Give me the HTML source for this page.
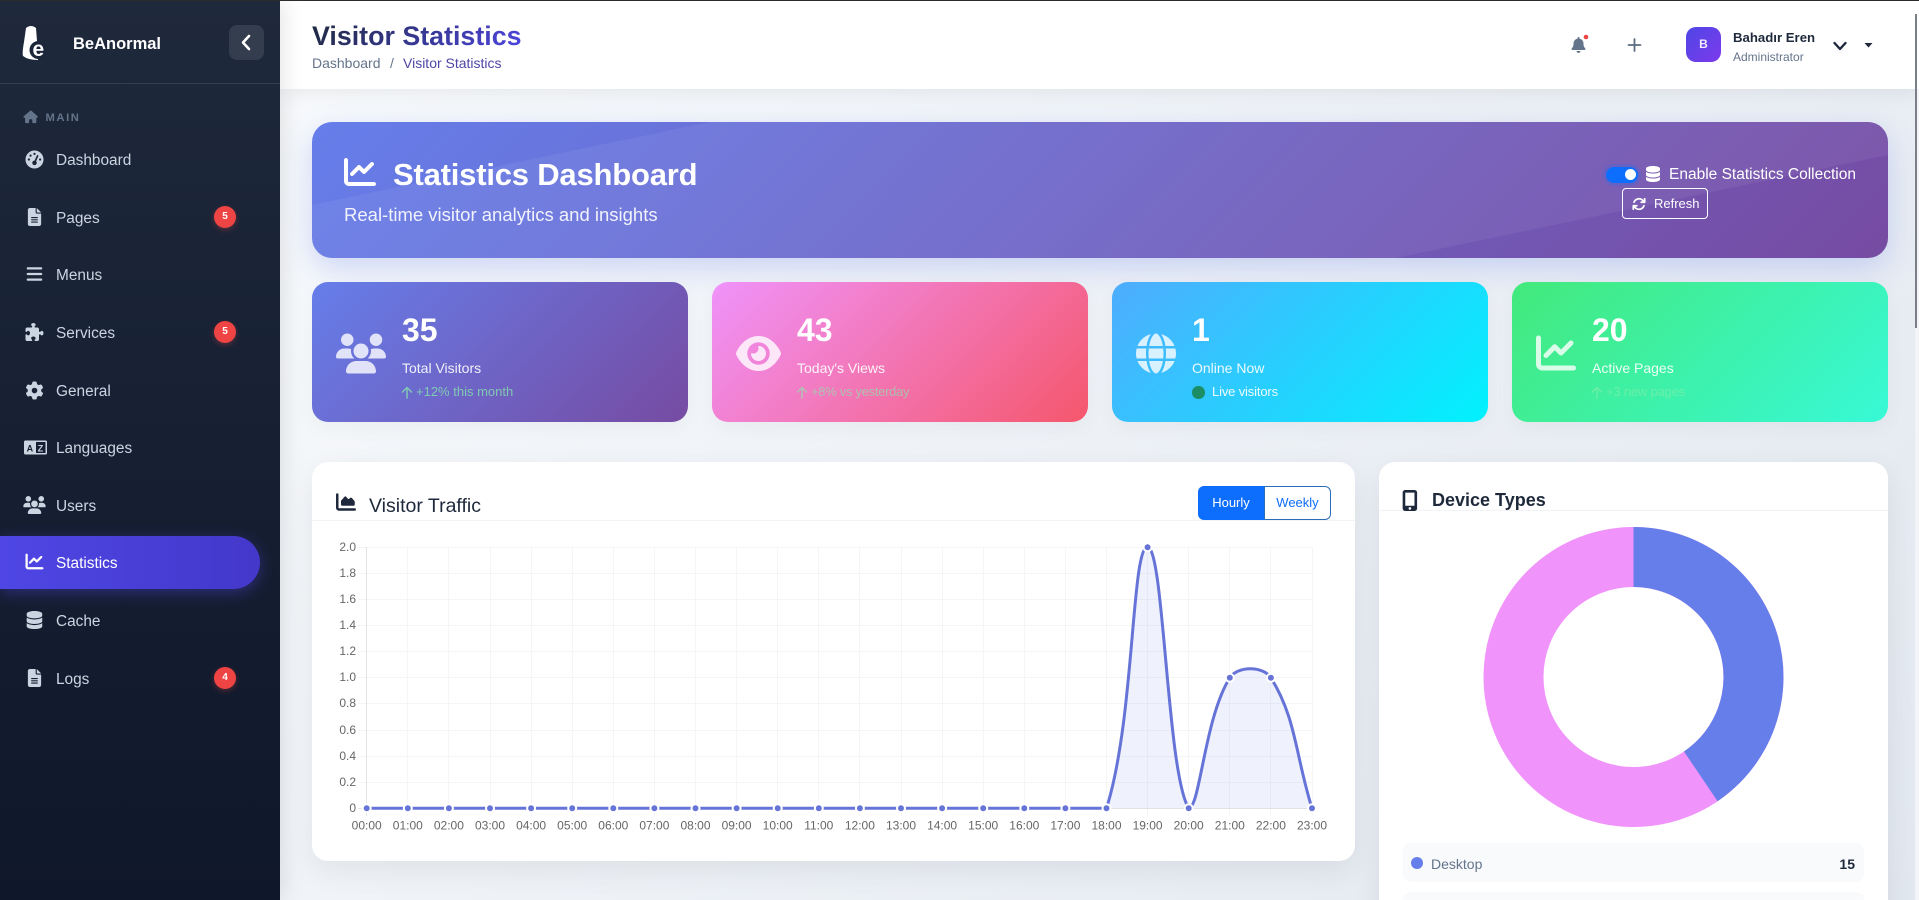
<!DOCTYPE html>
<html lang="en">
<head>
<meta charset="utf-8">
<title>Visitor Statistics</title>
<style>
html,body{margin:0;padding:0;width:1919px;height:900px;overflow:hidden;background:#f1f4f9;font-family:"Liberation Sans",Arial,sans-serif}
#root{position:relative;width:1919px;height:900px;overflow:hidden}
#root div{position:absolute;white-space:nowrap;box-sizing:border-box}
#main{left:280px;top:0;width:1639px;height:900px;background:linear-gradient(135deg,#f8fafc 0%,#e2e8f0 100%)}
#side{left:0;top:0;width:280px;height:900px;background:linear-gradient(180deg,#1e293b 0%,#0f172a 100%);box-shadow:4px 0 20px rgba(0,0,0,.1)}
#head{left:280px;top:0;width:1639px;height:89px;background:#fff;box-shadow:0 2px 20px rgba(0,0,0,.08)}
.nav{left:56px;font-size:15.4px;line-height:24px;height:24px;color:#cbd5e1}
.bdg{left:214px;width:22px;height:22px;border-radius:50%;background:#ef4444;color:#fff;font-size:10px;font-weight:bold;line-height:22px;text-align:center;box-shadow:0 2px 6px rgba(239,68,68,.3)}
.card{top:282px;width:376px;height:140px;border-radius:16px;box-shadow:0 6px 20px rgba(0,0,0,.04)}
.num{top:309.5px;font-size:32px;font-weight:bold;line-height:40px;color:#fff}
.lab{top:357.5px;font-size:14px;line-height:20px;color:rgba(255,255,255,.9)}
.sub{top:382px;font-size:13px;line-height:20px}
.white{background:#fff;border-radius:16px;box-shadow:0 10px 30px rgba(0,0,0,.07)}
</style>
</head>
<body>
<div id="root">
<div id="main"></div>

<!-- Hero -->
<div style="left:312px;top:122px;width:1576px;height:136px;border-radius:20px;background:linear-gradient(135deg,#667eea 0%,#764ba2 100%);box-shadow:0 10px 30px rgba(102,126,234,.28);overflow:hidden">
  <svg width="1576" height="136" style="position:absolute;left:0;top:0"><polygon points="0,83 398,0 1576,0 1576,33 1084,136 0,136" fill="rgba(255,255,255,.06)"/></svg>
</div>
<div style="left:393px;top:153px;font-size:31px;letter-spacing:-.2px;font-weight:bold;line-height:44px;color:#fff">Statistics Dashboard</div>
<div style="left:344px;top:201px;font-size:18.5px;line-height:28px;color:rgba(255,255,255,.9)">Real-time visitor analytics and insights</div>
<div style="left:1606px;top:166.5px;width:32px;height:16px;border-radius:8px;background:#0d6efd;box-shadow:0 0 0 3px rgba(13,110,253,.18)"></div>
<div style="left:1624.5px;top:169px;width:11px;height:11px;border-radius:50%;background:#fff"></div>
<div style="left:1669px;top:164px;font-size:15.5px;line-height:22px;color:#fff">Enable Statistics Collection</div>
<div style="left:1622px;top:188px;width:86px;height:31px;border:1px solid #fff;border-radius:4px"></div>
<div style="left:1654px;top:194px;font-size:13px;line-height:20px;color:#fff">Refresh</div>

<!-- Stat cards -->
<div class="card" style="left:312px;background:linear-gradient(135deg,#667eea 0%,#764ba2 100%)"></div>
<div class="card" style="left:712px;background:linear-gradient(135deg,#f093fb 0%,#f5576c 100%)"></div>
<div class="card" style="left:1112px;background:linear-gradient(135deg,#4facfe 0%,#00f2fe 100%)"></div>
<div class="card" style="left:1512px;background:linear-gradient(135deg,#43e97b 0%,#38f9d7 100%)"></div>
<div class="num" style="left:402px">35</div><div class="lab" style="left:402px">Total Visitors</div>
<div class="sub" style="left:416px;color:rgba(134,239,172,.72)">+12% this month</div>
<div class="num" style="left:797px">43</div><div class="lab" style="left:797px">Today's Views</div>
<div class="sub" style="left:811px;letter-spacing:-.3px;color:rgba(134,239,172,.6)">+8% vs yesterday</div>
<div class="num" style="left:1192px">1</div><div class="lab" style="left:1192px">Online Now</div>
<div style="left:1192px;top:386px;width:12.5px;height:12.5px;border-radius:50%;background:#198754;opacity:.9"></div>
<div class="sub" style="left:1212px;letter-spacing:-.15px;color:rgba(255,255,255,.9)">Live visitors</div>
<div class="num" style="left:1592px">20</div><div class="lab" style="left:1592px">Active Pages</div>
<div class="sub" style="left:1606px;letter-spacing:-.2px;color:rgba(134,239,172,.6)">+3 new pages</div>

<!-- Chart card -->
<div class="white" style="left:312px;top:462px;width:1043px;height:399px"></div>
<div style="left:312px;top:520px;width:1043px;height:1px;background:#f1f3f6"></div>
<div style="left:369px;top:491.5px;font-size:19.5px;line-height:28px;color:#1e293b">Visitor Traffic</div>
<div style="left:1198px;top:486px;width:66px;height:34px;background:#0d6efd;border-radius:6px 0 0 6px;color:#fff;font-size:13px;line-height:34px;text-align:center">Hourly</div>
<div style="left:1264px;top:486px;width:67px;height:34px;background:#fff;border:1px solid #2a6db8;border-radius:0 6px 6px 0;color:#0d6efd;font-size:13px;line-height:32px;text-align:center">Weekly</div>

<!-- Device card -->
<div class="white" style="left:1379px;top:462px;width:508.5px;height:480px"></div>
<div style="left:1379px;top:510px;width:508.5px;height:1px;background:#f1f3f6"></div>
<div style="left:1432px;top:487px;font-size:18px;font-weight:bold;line-height:26px;color:#1e293b">Device Types</div>
<div style="left:1403px;top:843px;width:461px;height:39px;background:#f8fafc;border-radius:8px"></div>
<div style="left:1403px;top:892px;width:461px;height:39px;background:#f8fafc;border-radius:8px"></div>
<div style="left:1411px;top:857px;width:12px;height:12px;border-radius:50%;background:#667eea"></div>
<div style="left:1431px;top:853.5px;font-size:14px;line-height:20px;color:#64748b">Desktop</div>
<div style="left:1820px;width:35px;text-align:right;top:853.5px;font-size:14px;font-weight:bold;line-height:20px;color:#1e293b">15</div>

<!-- Header -->
<div id="head"></div>
<div style="left:312px;top:17px;font-size:26.8px;font-weight:bold;line-height:38px;background:linear-gradient(135deg,#1e293b,#4f46e5);-webkit-background-clip:text;background-clip:text;color:transparent">Visitor Statistics</div>
<div style="left:312px;top:53px;font-size:14px;line-height:20px;color:#64748b">Dashboard</div>
<div style="left:390px;top:53px;font-size:14px;line-height:20px;color:#64748b">/</div>
<div style="left:403px;top:53px;font-size:14px;line-height:20px;color:#4f46a5">Visitor Statistics</div>
<div style="left:1686px;top:27px;width:35px;height:35px;border-radius:10px;background:linear-gradient(135deg,#4f46e5,#7c3aed);color:rgba(255,255,255,.9);font-size:12px;font-weight:bold;line-height:35px;text-align:center">B</div>
<div style="left:1733px;top:28.5px;font-size:13.2px;font-weight:bold;line-height:18px;color:#1e293b">Bahadır Eren</div>
<div style="left:1733px;top:48px;font-size:12px;line-height:18px;color:#64748b">Administrator</div>

<!-- Scrollbar -->
<div style="left:1915px;top:89px;width:4px;height:811px;background:#f3f4f7"></div>
<div style="left:1915px;top:14px;width:2px;height:314px;background:#7c7f88"></div>

<!-- Sidebar -->
<div id="side"></div>
<div style="left:0;top:83px;width:280px;height:1px;background:rgba(255,255,255,.1)"></div>
<div style="left:73px;top:31.5px;font-size:16.5px;font-weight:bold;line-height:24px;color:#fff">BeAnormal</div>
<div style="left:229px;top:25px;width:35px;height:35px;border-radius:8px;background:rgba(255,255,255,.1)"></div>
<div style="left:45.5px;top:109.5px;font-size:11.2px;font-weight:bold;letter-spacing:1.6px;line-height:16px;color:#64748b">MAIN</div>
<div style="left:0;top:536px;width:260px;height:53px;border-radius:0 27px 27px 0;background:linear-gradient(90deg,#4f46e5,#4338ca);box-shadow:0 4px 15px rgba(79,70,229,.4)"></div>
<div class="nav" style="top:149px">Dashboard</div>
<div class="nav" style="top:207px">Pages</div>
<div class="nav" style="top:264px">Menus</div>
<div class="nav" style="top:321.5px">Services</div>
<div class="nav" style="top:379.5px">General</div>
<div class="nav" style="top:437px">Languages</div>
<div class="nav" style="top:495px">Users</div>
<div class="nav" style="top:552px;color:#fff">Statistics</div>
<div class="nav" style="top:609.5px">Cache</div>
<div class="nav" style="top:667.5px">Logs</div>
<div class="bdg" style="top:206px">5</div>
<div class="bdg" style="top:321px">5</div>
<div class="bdg" style="top:667px">4</div>

<!-- Overlay SVG: icons + chart -->
<svg width="1919" height="900" viewBox="0 0 1919 900" style="position:absolute;left:0;top:0;pointer-events:none" font-family="Liberation Sans, Arial, sans-serif">
<defs>
<path id="fline" d="M64 64c0-17.7-14.3-32-32-32S0 46.3 0 64V400c0 44.2 35.8 80 80 80H480c17.7 0 32-14.3 32-32s-14.3-32-32-32H80c-8.8 0-16-7.2-16-16V64zm406.6 86.6c12.5-12.5 12.5-32.8 0-45.3s-32.8-12.5-45.3 0L320 210.7l-57.4-57.4c-12.5-12.5-32.8-12.5-45.3 0l-112 112c-12.5 12.5-12.5 32.8 0 45.3s32.8 12.5 45.3 0L240 221.3l57.4 57.4c12.5 12.5 32.8 12.5 45.3 0l128-128z"/>
<path id="ffile" d="M64 0C28.7 0 0 28.7 0 64V448c0 35.3 28.7 64 64 64H320c35.3 0 64-28.7 64-64V160H256c-17.7 0-32-14.3-32-32V0H64zM256 0V128H384L256 0zM112 256H272c8.8 0 16 7.2 16 16s-7.2 16-16 16H112c-8.8 0-16-7.2-16-16s7.2-16 16-16zm0 64H272c8.8 0 16 7.2 16 16s-7.2 16-16 16H112c-8.8 0-16-7.2-16-16s7.2-16 16-16zm0 64H272c8.8 0 16 7.2 16 16s-7.2 16-16 16H112c-8.8 0-16-7.2-16-16s7.2-16 16-16z"/>
<path id="fusers" d="M144 0a80 80 0 1 1 0 160A80 80 0 1 1 144 0zM512 0a80 80 0 1 1 0 160A80 80 0 1 1 512 0zM0 298.7C0 239.8 47.8 192 106.7 192h42.7c15.9 0 31 3.5 44.6 9.7c-1.3 7.2-1.9 14.7-1.9 22.3c0 38.2 16.8 72.5 43.3 96c-.2 0-.4 0-.7 0H21.3C9.6 320 0 310.4 0 298.7zM405.3 320c-.2 0-.4 0-.7 0c26.6-23.5 43.3-57.8 43.3-96c0-7.6-.7-15-1.9-22.3c13.6-6.3 28.7-9.7 44.6-9.7h42.7C592.2 192 640 239.8 640 298.7c0 11.8-9.6 21.3-21.3 21.3H405.3zM224 224a96 96 0 1 1 192 0 96 96 0 1 1 -192 0zM128 485.3C128 411.7 187.7 352 261.3 352H378.7C452.3 352 512 411.7 512 485.3c0 14.7-11.9 26.7-26.7 26.7H154.7c-14.7 0-26.7-11.9-26.7-26.7z"/>
<path id="fdb" d="M448 80v48c0 44.2-100.3 80-224 80S0 172.2 0 128V80C0 35.8 100.3 0 224 0S448 35.8 448 80zM393.2 214.7c20.8-7.4 39.9-16.9 54.8-28.6V288c0 44.2-100.3 80-224 80S0 332.2 0 288V186.1c14.9 11.8 34 21.2 54.8 28.6C99.7 230.7 159.5 240 224 240s124.3-9.3 169.2-25.3zM0 346.1c14.9 11.8 34 21.2 54.8 28.6C99.7 390.7 159.5 400 224 400s124.3-9.3 169.2-25.3c20.8-7.4 39.9-16.9 54.8-28.6V432c0 44.2-100.3 80-224 80S0 476.2 0 432V346.1z"/>
</defs>

<!-- Logo -->
<path d="M26 28Q31 24 36 28L37 41L38 60Q28 60 23 56Q22 53 24 42Z" fill="#fff"/>
<circle cx="38.5" cy="50" r="9" fill="#1c2639"/>
<text x="32.5" y="56" font-size="21" font-weight="bold" fill="#fff">e</text>
<!-- Collapse chevron -->
<path d="M249 36L243 42.5L249 49" fill="none" stroke="#fff" stroke-width="2.6" stroke-linecap="round" stroke-linejoin="round"/>
<!-- MAIN home -->
<svg x="23.5" y="110.5" width="14.4" height="12.8" viewBox="0 0 576 512" fill="#64748b"><path d="M575.8 255.5c0 18-15 32.1-32 32.1h-32l.7 160.2c0 2.7-.2 5.4-.5 8.1V472c0 22.1-17.9 40-40 40H456c-1.1 0-2.2 0-3.3-.1c-1.4 .1-2.8 .1-4.2 .1H416 392c-22.1 0-40-17.9-40-40V448 384c0-17.7-14.3-32-32-32H256c-17.7 0-32 14.3-32 32v64 24c0 22.1-17.9 40-40 40H160 128.1c-1.5 0-3-.1-4.5-.2c-1.2 .1-2.4 .2-3.6 .2H104c-22.1 0-40-17.9-40-40V360c0-.9 0-1.9 .1-2.8V287.6H32c-18 0-32-14-32-32.1c0-9 3-17 10-24L266.4 8c7-7 15-8 22-8s15 2 21 7L564.8 231.5c8 7 12 15 11 24z"/></svg>

<!-- Nav icons -->
<g fill="#cbd5e1">
<svg x="25.5" y="150.5" width="18" height="18" viewBox="0 0 512 512"><path d="M0 256a256 256 0 1 1 512 0A256 256 0 1 1 0 256zM288 96a32 32 0 1 0 -64 0 32 32 0 1 0 64 0zM256 416c35.3 0 64-28.7 64-64c0-17.4-6.9-33.1-18.1-44.6L366 161.7c5.3-12.1-.2-26.3-12.3-31.6s-26.3 .2-31.6 12.3L257.9 288c-.6 0-1.3 0-1.9 0c-35.3 0-64 28.7-64 64s28.7 64 64 64zM176 144a32 32 0 1 0 -64 0 32 32 0 1 0 64 0zM96 288a32 32 0 1 0 0-64 32 32 0 1 0 0 64zm352-32a32 32 0 1 0 -64 0 32 32 0 1 0 64 0z"/></svg>
<svg x="27.75" y="208" width="13.5" height="18" viewBox="0 0 384 512"><use href="#ffile"/></svg>
<svg x="26.6" y="265" width="15.75" height="18" viewBox="0 0 448 512"><path d="M0 96C0 78.3 14.3 64 32 64H416c17.7 0 32 14.3 32 32s-14.3 32-32 32H32C14.3 128 0 113.7 0 96zM0 256c0-17.7 14.3-32 32-32H416c17.7 0 32 14.3 32 32s-14.3 32-32 32H32c-17.7 0-32-14.3-32-32zM448 416c0 17.7-14.3 32-32 32H32c-17.7 0-32-14.3-32-32s14.3-32 32-32H416c17.7 0 32 14.3 32 32z"/></svg>
<svg x="25.5" y="323" width="18" height="18" viewBox="0 0 512 512"><path d="M192 104.8c0-9.2-5.8-17.3-13.2-22.8C167.2 73.3 160 61.3 160 48c0-26.5 28.7-48 64-48s64 21.5 64 48c0 13.3-7.2 25.3-18.8 34c-7.4 5.5-13.2 13.6-13.2 22.8c0 12.8 10.4 23.2 23.2 23.2H336c26.5 0 48 21.5 48 48v56.8c0 12.8 10.4 23.2 23.2 23.2c9.2 0 17.3-5.8 22.8-13.2c8.7-11.6 20.7-18.8 34-18.8c26.5 0 48 28.7 48 64s-21.5 64-48 64c-13.3 0-25.3-7.2-34-18.8c-5.5-7.4-13.6-13.2-22.8-13.2c-12.8 0-23.2 10.4-23.2 23.2V464c0 26.5-21.5 48-48 48H279.2c-12.8 0-23.2-10.4-23.2-23.2c0-9.2 5.8-17.3 13.2-22.8c11.6-8.7 18.8-20.7 18.8-34c0-26.5-28.7-48-64-48s-64 21.5-64 48c0 13.3 7.2 25.3 18.8 34c7.4 5.5 13.2 13.6 13.2 22.8c0 12.8-10.4 23.2-23.2 23.2H48c-26.5 0-48-21.5-48-48V343.2C0 330.4 10.4 320 23.2 320c9.2 0 17.3 5.8 22.8 13.2C54.7 344.8 66.7 352 80 352c26.5 0 48-28.7 48-64s-21.5-64-48-64c-13.3 0-25.3 7.2-34 18.8C40.5 250.2 32.4 256 23.2 256C10.4 256 0 245.6 0 232.8V176c0-26.5 21.5-48 48-48H168.8c12.8 0 23.2-10.4 23.2-23.2z"/></svg>
<svg x="25.5" y="381.5" width="18" height="18" viewBox="0 0 512 512"><path d="M495.9 166.6c3.2 8.7 .5 18.4-6.4 24.6l-43.3 39.4c1.1 8.3 1.7 16.8 1.7 25.4s-.6 17.1-1.7 25.4l43.3 39.4c6.9 6.2 9.6 15.9 6.4 24.6c-4.4 11.9-9.7 23.3-15.8 34.3l-4.7 8.1c-6.6 11-14 21.4-22.1 31.2c-5.9 7.2-15.7 9.6-24.5 6.8l-55.7-17.7c-13.4 10.3-28.2 18.9-44 25.4l-12.5 57.1c-2 9.1-9 16.3-18.2 17.8c-13.8 2.3-28 3.5-42.5 3.5s-28.7-1.2-42.5-3.5c-9.2-1.5-16.2-8.7-18.2-17.8l-12.5-57.1c-15.8-6.5-30.6-15.1-44-25.4L83.1 425.9c-8.8 2.8-18.6 .3-24.5-6.8c-8.1-9.8-15.5-20.2-22.1-31.2l-4.7-8.1c-6.1-11-11.4-22.4-15.8-34.3c-3.2-8.7-.5-18.4 6.4-24.6l43.3-39.4C64.6 273.1 64 264.6 64 256s.6-17.1 1.7-25.4L22.4 191.2c-6.9-6.2-9.6-15.9-6.4-24.6c4.4-11.9 9.7-23.3 15.8-34.3l4.7-8.1c6.6-11 14-21.4 22.1-31.2c5.9-7.2 15.7-9.6 24.5-6.8l55.7 17.7c13.4-10.3 28.2-18.9 44-25.4l12.5-57.1c2-9.1 9-16.3 18.2-17.8C227.3 1.2 241.5 0 256 0s28.7 1.2 42.5 3.5c9.2 1.5 16.2 8.7 18.2 17.8l12.5 57.1c15.8 6.5 30.6 15.1 44 25.4l55.7-17.7c8.8-2.8 18.6-.3 24.5 6.8c8.1 9.8 15.5 20.2 22.1 31.2l4.7 8.1c6.1 11 11.4 22.4 15.8 34.3zM256 336a80 80 0 1 0 0-160 80 80 0 1 0 0 160z"/></svg>
<rect x="24" y="440.5" width="23" height="14" rx="1.5"/>
<rect x="36" y="442" width="9.5" height="11" fill="#162034"/>
<text x="26.6" y="451.5" font-size="9" font-weight="bold" fill="#162034">A</text>
<text x="37.8" y="451.5" font-size="9" font-weight="bold" fill="#cbd5e1">Z</text>
<svg x="23.25" y="496" width="22.5" height="18" viewBox="0 0 640 512"><use href="#fusers"/></svg>
<svg x="25.5" y="552.5" width="18" height="18" viewBox="0 0 512 512" fill="#fff"><use href="#fline"/></svg>
<svg x="26.6" y="611" width="15.75" height="18" viewBox="0 0 448 512"><use href="#fdb"/></svg>
<svg x="27.75" y="669" width="13.5" height="18" viewBox="0 0 384 512"><use href="#ffile"/></svg>
</g>

<!-- Header icons -->
<svg x="1571.5" y="37" width="14" height="16" viewBox="0 0 448 512" fill="#64748b"><path d="M224 0c-17.7 0-32 14.3-32 32V51.2C119 66 64 130.6 64 208v18.8c0 47-17.3 92.4-48.5 127.6l-7.4 8.3c-8.4 9.4-10.4 22.9-5.3 34.4S19.4 416 32 416H416c12.6 0 24-7.4 29.2-18.9s3.1-25-5.3-34.4l-7.4-8.3C401.3 319.2 384 273.9 384 226.8V208c0-77.4-55-142-128-156.8V32c0-17.7-14.3-32-32-32zm45.3 493.3c12-12 18.7-28.3 18.7-45.3H224 160c0 17 6.7 33.3 18.7 45.3s28.3 18.7 45.3 18.7s33.3-6.7 45.3-18.7z"/></svg>
<circle cx="1586" cy="37" r="2.3" fill="#ef4444"/>
<path d="M1634.5 39V51M1628.5 45H1640.5" stroke="#5b6b80" stroke-width="1.8" stroke-linecap="round" fill="none"/>
<path d="M1834.5 43L1840 49L1845.5 43" fill="none" stroke="#1e293b" stroke-width="2.4" stroke-linecap="round" stroke-linejoin="round"/>
<polygon points="1864.5,43 1872.5,43 1868.5,47.5" fill="#1e293b"/>

<!-- Hero icons -->
<svg x="344" y="156" width="32" height="32" viewBox="0 0 512 512" fill="#fff"><use href="#fline"/></svg>
<svg x="1646" y="166" width="14" height="16" viewBox="0 0 448 512" fill="#fff"><use href="#fdb"/></svg>
<svg x="1632" y="197" width="14" height="14" viewBox="0 0 512 512" fill="#fff"><path d="M105.1 202.6c7.7-21.8 20.2-42.3 37.8-59.8c62.5-62.5 163.8-62.5 226.3 0L386.3 160H336c-17.7 0-32 14.3-32 32s14.3 32 32 32H463.5c0 0 0 0 0 0h.4c17.7 0 32-14.3 32-32V64c0-17.7-14.3-32-32-32s-32 14.3-32 32v51.2L414.4 97.6c-87.5-87.5-229.3-87.5-316.8 0C73.2 122 55.6 150.7 44.8 181.4c-5.9 16.7 2.9 34.9 19.5 40.8s34.9-2.9 40.8-19.5zM39 289.3c-5 1.5-9.8 4.2-13.7 8.2c-4 4-6.7 8.8-8.1 14c-.3 1.2-.6 2.5-.8 3.8c-.3 1.7-.4 3.4-.4 5.1V448c0 17.7 14.3 32 32 32s32-14.3 32-32V396.9l17.6 17.5 0 0c87.5 87.4 229.3 87.4 316.7 0c24.4-24.4 42.1-53.1 52.9-83.7c5.9-16.7-2.9-34.9-19.5-40.8s-34.9 2.9-40.8 19.5c-7.7 21.8-20.2 42.3-37.8 59.8c-62.5 62.5-163.8 62.5-226.3 0l-.1-.1L125.6 352H176c17.7 0 32-14.3 32-32s-14.3-32-32-32H48.4c-1.6 0-3.2 .1-4.8 .3s-3.1 .5-4.6 1z"/></svg>

<!-- Stat icons -->
<g fill="#fff" fill-opacity=".8">
<svg x="336" y="333.5" width="50" height="40" viewBox="0 0 640 512"><use href="#fusers"/></svg>
<svg x="736" y="333.5" width="45" height="40" viewBox="0 0 576 512"><path d="M288 32c-80.8 0-145.5 36.8-192.6 80.6C48.6 156 17.3 208 2.5 243.7c-3.3 7.9-3.3 16.7 0 24.6C17.3 304 48.6 356 95.4 399.4C142.5 443.2 207.2 480 288 480s145.5-36.8 192.6-80.6c46.8-43.5 78.1-95.4 93-131.1c3.3-7.9 3.3-16.7 0-24.6c-14.9-35.7-46.2-87.7-93-131.1C433.5 68.8 368.8 32 288 32zM144 256a144 144 0 1 1 288 0 144 144 0 1 1 -288 0zm144-64c0 35.3-28.7 64-64 64c-7.1 0-13.9-1.2-20.3-3.3c-5.5-1.8-11.9 1.6-11.7 7.4c.3 6.9 1.3 13.8 3.2 20.7c13.7 51.2 66.4 81.6 117.6 67.9s81.6-66.4 67.9-117.6c-11.1-41.5-47.8-69.4-88.6-71.1c-5.8-.2-9.2 6.1-7.4 11.7c2.1 6.4 3.3 13.2 3.3 20.3z"/></svg>
<svg x="1136" y="333.5" width="40" height="40" viewBox="0 0 512 512"><path d="M352 256c0 22.2-1.2 43.6-3.3 64H163.3c-2.2-20.4-3.3-41.8-3.3-64s1.2-43.6 3.3-64H348.7c2.2 20.4 3.3 41.8 3.3 64zm28.8-64H503.9c5.3 20.5 8.1 41.9 8.1 64s-2.8 43.5-8.1 64H380.8c2.1-20.6 3.2-42 3.2-64s-1.1-43.4-3.2-64zm112.6-32H376.7c-10-63.9-29.8-117.4-55.3-151.6c78.3 20.7 142 77.5 172.1 151.6zm-149.1 0H167.7c6.1-36.4 15.5-68.6 27-94.7c10.5-23.6 22.2-40.7 33.5-51.5C239.4 3.2 248.7 0 256 0s16.6 3.2 27.8 13.8c11.3 10.8 23 27.9 33.5 51.5c11.6 26 20.9 58.2 27 94.7zm-209 0H18.6C48.6 85.9 112.2 29.1 190.6 8.4C165.1 42.6 145.3 96.1 135.3 160zM8.1 192H131.2c-2.1 20.6-3.2 42-3.2 64s1.1 43.4 3.2 64H8.1C2.8 299.5 0 278.1 0 256s2.8-43.5 8.1-64zM194.7 446.6c-11.6-26-20.9-58.2-27-94.6H344.3c-6.1 36.4-15.5 68.6-27 94.6c-10.5 23.6-22.2 40.7-33.5 51.5C272.6 508.8 263.3 512 256 512s-16.6-3.2-27.8-13.8c-11.3-10.8-23-27.9-33.5-51.5zM135.3 352c10 63.9 29.8 117.4 55.3 151.6C112.2 482.9 48.6 426.1 18.6 352H135.3zm358.1 0c-30 74.1-93.6 130.9-172 151.6c25.5-34.2 45.2-87.7 55.3-151.6H493.4z"/></svg>
<svg x="1536" y="333" width="40" height="40" viewBox="0 0 512 512"><use href="#fline"/></svg>
</g>
<g fill="none" stroke-width="1.5" stroke-linecap="round" stroke-linejoin="round">
<path d="M407 398V387.5M402.5 392L407 387.5L411.5 392" stroke="rgba(134,239,172,.72)"/>
<path d="M802 398V387.5M797.5 392L802 387.5L806.5 392" stroke="rgba(134,239,172,.6)"/>
<path d="M1597 398V387.5M1592.5 392L1597 387.5L1601.5 392" stroke="rgba(134,239,172,.6)"/>
</g>

<!-- Card title icons -->
<svg x="336" y="492" width="20" height="20" viewBox="0 0 512 512" fill="#1e293b"><path d="M64 64c0-17.7-14.3-32-32-32S0 46.3 0 64V400c0 44.2 35.8 80 80 80H480c17.7 0 32-14.3 32-32s-14.3-32-32-32H80c-8.8 0-16-7.2-16-16V64zm96 288H448c17.7 0 32-14.3 32-32V251.8c0-7.6-2.7-15-7.7-20.8l-65.8-76.8c-12.1-14.2-33.7-15-46.9-1.8l-21 21c-10 10-26.4 9.2-35.4-1.6l-39.2-47c-12.6-15.1-35.7-15.4-48.7-.6L135.9 215c-5.1 5.8-7.9 13.3-7.9 21.1v84c0 17.7 14.3 32 32 32z"/></svg>
<svg x="1402" y="490" width="15.75" height="21" viewBox="0 0 384 512" fill="#1e293b"><path d="M16 64C16 28.7 44.7 0 80 0H304c35.3 0 64 28.7 64 64V448c0 35.3-28.7 64-64 64H80c-35.3 0-64-28.7-64-64V64zM224 448a32 32 0 1 0 -64 0 32 32 0 1 0 64 0zM304 64H80V384H304V64z"/></svg>

<!-- Chart grid -->
<path shape-rendering="crispEdges" fill="none" stroke="rgba(0,0,0,.04)" stroke-width="1" d="M358 547.5H1312M358 573.5H1312M358 599.5H1312M358 625.5H1312M358 651.5H1312M358 677.5H1312M358 703.5H1312M358 730.5H1312M358 756.5H1312M358 782.5H1312M407.5 547V816M448.5 547V816M490.5 547V816M531.5 547V816M572.5 547V816M613.5 547V816M654.5 547V816M695.5 547V816M736.5 547V816M777.5 547V816M818.5 547V816M859.5 547V816M901.5 547V816M942.5 547V816M983.5 547V816M1024.5 547V816M1065.5 547V816M1106.5 547V816M1147.5 547V816M1188.5 547V816M1229.5 547V816M1270.5 547V816M1312.5 547V816"/>
<path shape-rendering="crispEdges" fill="none" stroke="rgba(0,0,0,.1)" stroke-width="1" d="M366.5 547V816M358 808.5H1312"/>
<!-- Chart fill + line -->
<path fill="rgba(102,126,234,.1)" d="M1106.5 808.3C1134.9 718 1131.2 547.3 1147.6 547.3C1164 547.3 1167 773.9 1188.7 808.3C1199.9 808.3 1204.5 717.9 1229.8 677.8C1237.4 665.7 1263.3 665.7 1270.9 677.8C1296.2 717.9 1295.6 756.1 1312 808.3Z"/>
<path fill="none" stroke="#6674d8" stroke-width="3" d="M366.7 808.3H1106.5C1134.9 718 1131.2 547.3 1147.6 547.3C1164 547.3 1167 773.9 1188.7 808.3C1199.9 808.3 1204.5 717.9 1229.8 677.8C1237.4 665.7 1263.3 665.7 1270.9 677.8C1296.2 717.9 1295.6 756.1 1312 808.3"/>
<!-- Points -->
<g fill="#6674d8" stroke="#fff" stroke-width="2">
<circle cx="366.7" cy="808.3" r="4"/><circle cx="407.8" cy="808.3" r="4"/><circle cx="448.9" cy="808.3" r="4"/><circle cx="490" cy="808.3" r="4"/><circle cx="531.1" cy="808.3" r="4"/><circle cx="572.2" cy="808.3" r="4"/><circle cx="613.3" cy="808.3" r="4"/><circle cx="654.4" cy="808.3" r="4"/><circle cx="695.5" cy="808.3" r="4"/><circle cx="736.6" cy="808.3" r="4"/><circle cx="777.7" cy="808.3" r="4"/><circle cx="818.8" cy="808.3" r="4"/><circle cx="859.9" cy="808.3" r="4"/><circle cx="901" cy="808.3" r="4"/><circle cx="942.1" cy="808.3" r="4"/><circle cx="983.2" cy="808.3" r="4"/><circle cx="1024.3" cy="808.3" r="4"/><circle cx="1065.4" cy="808.3" r="4"/><circle cx="1106.5" cy="808.3" r="4"/><circle cx="1147.6" cy="547.3" r="4"/><circle cx="1188.7" cy="808.3" r="4"/><circle cx="1229.8" cy="677.8" r="4"/><circle cx="1270.9" cy="677.8" r="4"/><circle cx="1312" cy="808.3" r="4"/>
</g>
<!-- Y labels -->
<g font-size="12" fill="#666" text-anchor="end">
<text x="356" y="551">2.0</text><text x="356" y="577">1.8</text><text x="356" y="603">1.6</text><text x="356" y="629">1.4</text><text x="356" y="655">1.2</text><text x="356" y="681">1.0</text><text x="356" y="707">0.8</text><text x="356" y="734">0.6</text><text x="356" y="760">0.4</text><text x="356" y="786">0.2</text><text x="356" y="812">0</text>
</g>
<!-- X labels -->
<g font-size="12" fill="#666" text-anchor="middle">
<text x="366.7" y="829.5">00:00</text><text x="407.8" y="829.5">01:00</text><text x="448.9" y="829.5">02:00</text><text x="490" y="829.5">03:00</text><text x="531.1" y="829.5">04:00</text><text x="572.2" y="829.5">05:00</text><text x="613.3" y="829.5">06:00</text><text x="654.4" y="829.5">07:00</text><text x="695.5" y="829.5">08:00</text><text x="736.6" y="829.5">09:00</text><text x="777.7" y="829.5">10:00</text><text x="818.8" y="829.5">11:00</text><text x="859.9" y="829.5">12:00</text><text x="901" y="829.5">13:00</text><text x="942.1" y="829.5">14:00</text><text x="983.2" y="829.5">15:00</text><text x="1024.3" y="829.5">16:00</text><text x="1065.4" y="829.5">17:00</text><text x="1106.5" y="829.5">18:00</text><text x="1147.6" y="829.5">19:00</text><text x="1188.7" y="829.5">20:00</text><text x="1229.8" y="829.5">21:00</text><text x="1270.9" y="829.5">22:00</text><text x="1312" y="829.5">23:00</text>
</g>

<!-- Donut -->
<circle cx="1633.5" cy="677" r="120" fill="none" stroke="#f093fb" stroke-width="60"/>
<path fill="#667eea" d="M1633.5 527A150 150 0 0 1 1717.6 801.2L1684 751.5A90 90 0 0 0 1633.5 587Z"/>

<!-- Top line -->
<rect x="0" y="0" width="1919" height="1" fill="#2b2b2f"/>
</svg>
</div>
</body>
</html>
